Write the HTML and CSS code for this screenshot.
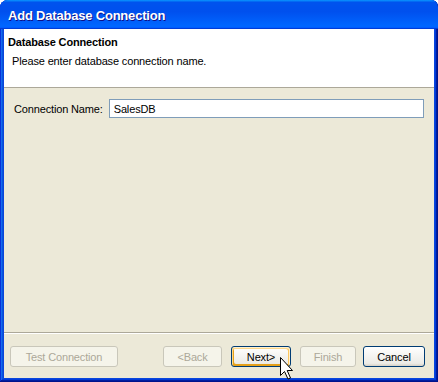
FILE: index.html
```html
<!DOCTYPE html>
<html lang="en">
  <head>
    <meta charset="UTF-8" />
    <title>Add Database Connection</title>
    <link rel="stylesheet" href="styles.css">
  </head>
  <body>
    <div class="window">
      <div class="title-bar">Add Database Connection</div>
      <div class="window-body">
        <div class="header">
          <div class="header-title">Database Connection</div>
          <div class="header-desc">Please enter database connection name.</div>
        </div>

        <div class="content">
          <div class="field-row">
            <label for="connName">Connection Name:</label>
            <input id="connName" type="text" value="SalesDB" />
          </div>
        </div>

        <div class="footer">
          <button class="btn btn-test" disabled>Test Connection</button>
          <div class="spacer"></div>
          <button class="btn btn-back" disabled>&lt;Back</button>
          <button class="btn btn-next default">Next&gt;</button>
          <button class="btn btn-finish" disabled>Finish</button>
          <button class="btn btn-cancel">Cancel</button>
        </div>
      </div>

      <svg class="cursor" width="14" height="23" viewBox="0 0 14 23">
        <path d="M0.5 0.5 V18.5 L4.5 14.5 L8 22 L10.5 21 L7.2 13.5 H12.5 Z" fill="#fff" stroke="#000" stroke-width="1" stroke-linejoin="miter" />
      </svg>
    </div>
  </body>
</html>
```

FILE: styles.css
```css
* {
  box-sizing: border-box;
}
body {
  margin: 0;
  font-family: "Liberation Sans", Arial, sans-serif;
  font-size: 11px;
  letter-spacing: -0.15px;
  color: #000;
  background: #fff;
}

.window {
  position: relative;
  width: 438px;
  height: 382px;
  display: flex;
  flex-direction: column;
  padding: 0 4px 4px 4px;
  background: #0a46dc;
  border-radius: 8px 7px 0 0;
  box-shadow: inset -1px -1px #00138c, inset 1px 1px #0831d9, inset -2px -2px #001ea0,
    inset 2px 2px #166aee, inset -3px -3px #003bda, inset 3px 3px #0855dd;
}

.title-bar {
  height: 29px;
  margin: 0 -4px;
  padding: 1px 8px 0 8px;
  display: flex;
  align-items: center;
  font-size: 13px;
  font-weight: bold;
  letter-spacing: -0.2px;
  color: #fff;
  text-shadow: 1px 1px #0f1089;
  border-radius: 8px 7px 0 0;
  background: linear-gradient(180deg, #0997ff, #0053ee 8%, #0050ee 40%, #06f 88%,
      #06f 93%, #005bff 95%, #003dd7 96%, #003dd7);
}

.window-body {
  flex: 1;
  display: flex;
  flex-direction: column;
  background: #ece9d8;
}

.header {
  height: 59px;
  background: #fff;
  border-bottom: 1px solid #aca899;
  padding: 7px 4px 0 4px;
}
.header-title {
  font-weight: bold;
  line-height: 13px;
}
.header-desc {
  margin-top: 6px;
  padding-left: 4px;
  line-height: 13px;
}

.content {
  flex: 1;
  padding: 11px 10px 0 9px;
}
.field-row {
  display: flex;
  align-items: center;
  gap: 6px;
}
.field-row label {
  padding-left: 1px;
}
.field-row input {
  flex: 1;
  height: 19px;
  border: 1px solid #7f9db9;
  padding: 0 4px;
  font-family: inherit;
  font-size: 11px;
  letter-spacing: inherit;
  color: #000;
  background: #fff;
}

.footer {
  display: flex;
  align-items: center;
  border-top: 1px solid #aca899;
  box-shadow: inset 0 1px #fff;
  padding: 13px 9px 11px 6px;
}
.spacer {
  flex: 1;
}

.btn {
  height: 21px;
  font-family: inherit;
  font-size: 11px;
  letter-spacing: inherit;
  color: #000;
  padding: 0;
  border: 1px solid #003c74;
  border-radius: 3px;
  background: linear-gradient(180deg, #fff, #ecebe6 86%, #d6d0c5);
}
.btn.default {
  box-shadow: inset -1px 1px #fff0cf, inset 1px 2px #fdd889, inset -2px 2px #fbc761,
    inset 2px -2px #e5a01a;
}
.btn:disabled {
  color: #aca899;
  border-color: #c9c7ba;
  background: #f5f4ea;
}
.btn-test {
  width: 108px;
}
.btn-back {
  width: 59px;
}
.btn-next {
  width: 60px;
  margin-left: 9px;
}
.btn-finish {
  width: 56px;
  margin-left: 9px;
}
.btn-cancel {
  width: 62px;
  margin-left: 7px;
}

.cursor {
  position: absolute;
  left: 280px;
  top: 357px;
}
```
